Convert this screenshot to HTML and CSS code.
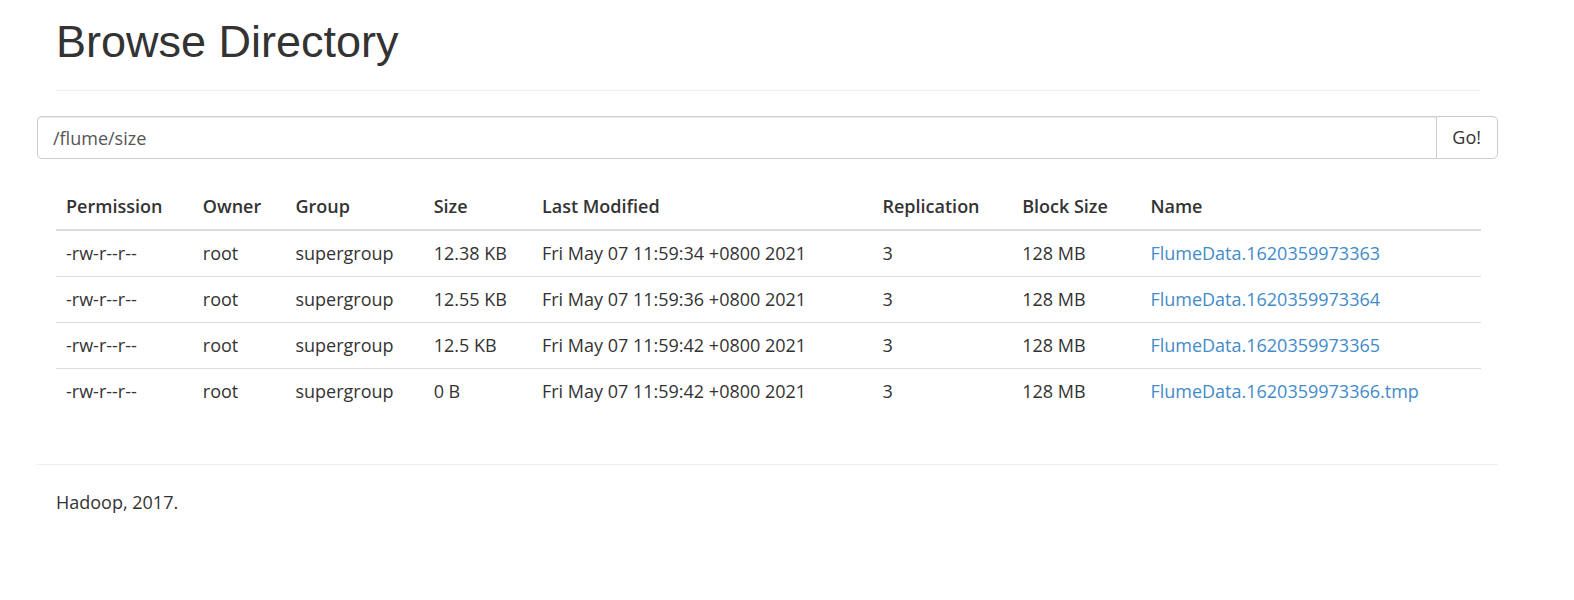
FILE: index.html
```html
<!DOCTYPE html>
<html lang="en">
<head>
<meta charset="utf-8">
<title>Browsing HDFS</title>
<link rel="stylesheet" href="styles.css">
</head>
<body>
<div class="container">
  <header class="page-header">
    <h1 class="page-title">Browse Directory</h1>
  </header>
  <form class="path-form">
    <input class="path-input" type="text" aria-label="Directory path" value="/flume/size">
    <button class="path-button" type="button">Go!</button>
  </form>
  <main class="listing">
    <table class="files">
      <colgroup>
        <col class="col-permission"><col class="col-owner"><col class="col-group"><col class="col-size">
        <col class="col-modified"><col class="col-replication"><col class="col-block"><col>
      </colgroup>
      <thead>
        <tr><th>Permission</th><th>Owner</th><th>Group</th><th>Size</th><th>Last Modified</th><th>Replication</th><th>Block Size</th><th>Name</th></tr>
      </thead>
      <tbody>
        <tr><td>-rw-r--r--</td><td>root</td><td>supergroup</td><td>12.38 KB</td><td>Fri May 07 11:59:34 +0800 2021</td><td>3</td><td>128 MB</td><td><a href="#">FlumeData.1620359973363</a></td></tr>
        <tr><td>-rw-r--r--</td><td>root</td><td>supergroup</td><td>12.55 KB</td><td>Fri May 07 11:59:36 +0800 2021</td><td>3</td><td>128 MB</td><td><a href="#">FlumeData.1620359973364</a></td></tr>
        <tr><td>-rw-r--r--</td><td>root</td><td>supergroup</td><td>12.5 KB</td><td>Fri May 07 11:59:42 +0800 2021</td><td>3</td><td>128 MB</td><td><a href="#">FlumeData.1620359973365</a></td></tr>
        <tr><td>-rw-r--r--</td><td>root</td><td>supergroup</td><td>0 B</td><td>Fri May 07 11:59:42 +0800 2021</td><td>3</td><td>128 MB</td><td><a href="#">FlumeData.1620359973366.tmp</a></td></tr>
      </tbody>
    </table>
  </main>
  <footer class="footer">
    <p class="footer-text">Hadoop, 2017.</p>
  </footer>
</div>
</body>
</html>
```
FILE: styles.css
```css
* {
  box-sizing: border-box;
}

body {
  margin: 0;
  background: #fff;
  color: #333;
  font: 18px/25px "Open Sans", "Noto Sans", sans-serif;
}

.container {
  padding: 17px 76px 0 37px;
}

.page-header {
  margin: 0 17px 25px 19px;
  padding-bottom: 23px;
  border-bottom: 1px solid #eee;
}

.page-title {
  margin: 0;
  font: 400 45px/50px "Liberation Sans", Arial, sans-serif;
}

.path-form {
  display: flex;
}

.path-input,
.path-button {
  height: 43px;
  border: 1px solid #ccc;
  background: #fff;
  font: inherit;
}

.path-input {
  flex: 1;
  min-width: 0;
  padding: 0 15px;
  border-right: 0;
  border-radius: 5px 0 0 5px;
  color: #555;
  box-shadow: inset 0 1px 1px rgba(0, 0, 0, 0.075);
}

.path-button {
  padding: 0 16px 0 15px;
  border-radius: 0 5px 5px 0;
  color: #333;
}

.listing {
  padding: 25px 17px 0 19px;
}

.files {
  width: 100%;
  border-collapse: separate;
  border-spacing: 0;
  table-layout: fixed;
}

.files th,
.files td {
  padding: 10px;
  text-align: left;
  white-space: nowrap;
}

.files th {
  border-bottom: 2px solid #ddd;
  font-weight: 600;
}

.files tr + tr td {
  border-top: 1px solid #ddd;
}

.files a {
  color: #428bca;
  text-decoration: none;
}

.col-permission { width: 9.6%; }
.col-owner { width: 6.5%; }
.col-group { width: 9.7%; }
.col-size { width: 7.6%; }
.col-modified { width: 23.9%; }
.col-replication { width: 9.8%; }
.col-block { width: 9%; }

.footer {
  margin-top: 50px;
  padding: 25px 19px;
  border-top: 1px solid #eee;
}

.footer-text {
  margin: 0;
}
```
